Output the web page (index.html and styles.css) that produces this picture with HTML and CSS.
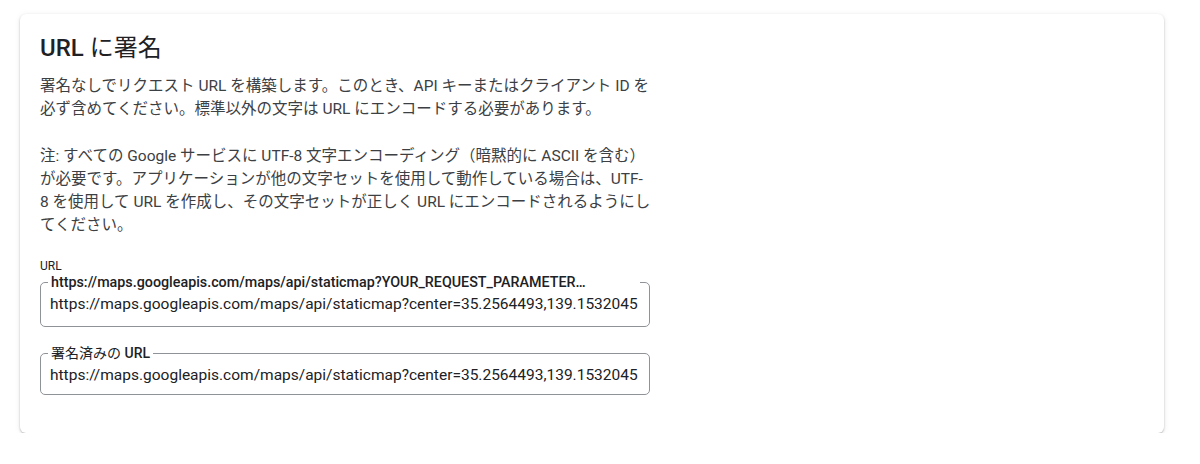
FILE: index.html
```html
<!DOCTYPE html>
<html lang="ja">
<head>
<meta charset="utf-8">
<link rel="stylesheet" href="styles.css">
</head>
<body>
<div class="page">
  <section class="card">
    <h2 class="title">URL <span class="jp">に署名</span></h2>
    <div class="content">
      <p class="para">署名なしでリクエスト URL を構築します。このとき、API キーまたはクライアント ID を必ず含めてください。標準以外の文字は URL にエンコードする必要があります。</p>
      <p class="para">注: すべての Google サービスに UTF-8 文字エンコーディング（暗黙的に ASCII を含む）が必要です。アプリケーションが他の文字セットを使用して動作している場合は、UTF-<br>8 を使用して URL を作成し、その文字セットが正しく URL にエンコードされるようにしてください。</p>
      <div class="field-label">URL</div>
      <fieldset class="field">
        <legend class="legend legend-wide">https://maps.googleapis.com/maps/api/staticmap?YOUR_REQUEST_PARAMETER…</legend>
        <div class="value">https://maps.googleapis.com/maps/api/staticmap?center=35.2564493,139.1532045</div>
      </fieldset>
      <fieldset class="field field-second">
        <legend class="legend"><span class="jp">署名済みの</span> URL</legend>
        <div class="value">https://maps.googleapis.com/maps/api/staticmap?center=35.2564493,139.1532045</div>
      </fieldset>
    </div>
  </section>
</div>
</body>
</html>
```

FILE: styles.css
```css
html, body {
  margin: 0;
  padding: 0;
  background: #ffffff;
}

body {
  font-family: Roboto, "Noto Sans CJK JP", sans-serif;
  color: #3c4043;
}

.page {
  padding: 14px 36px 0 20px;
}

.card {
  height: 419px;
  box-sizing: border-box;
  padding: 20px 20px;
  border-radius: 6px;
  background: #ffffff;
  box-shadow: 0 1px 2px rgba(0, 0, 0, 0.25), 0 1px 6px rgba(0, 0, 0, 0.08);
}

.title {
  margin: 0;
  font-size: 24px;
  line-height: 28px;
  font-weight: 500;
  color: #202124;
}

.content {
  width: 612px;
}

.para {
  margin: 13px 0 0;
  font-size: 15.5px;
  line-height: 23px;
}

.para + .para {
  margin-top: 24px;
}

.field-label {
  margin-top: 21px;
  font-size: 12px;
  line-height: 16px;
  color: #202124;
}

.field {
  margin: 0;
  min-width: 0;
  padding: 0 10px 10px 9px;
  width: 610px;
  box-sizing: border-box;
  border: 1px solid #8f9398;
  border-radius: 5px;
}

.field-second {
  margin-top: 18px;
  padding-bottom: 7px;
}

.legend {
  padding: 0 3px;
  margin-left: -2px;
  font-size: 14px;
  line-height: 16px;
  font-weight: 500;
  color: #202124;
  white-space: nowrap;
}

.legend-wide {
  width: 592px;
  box-sizing: border-box;
  font-size: 14.3px;
}

.jp {
  font-weight: 400;
}

.value {
  margin-top: 2px;
  font-size: 15.5px;
  line-height: 24px;
  color: #202124;
  white-space: nowrap;
  overflow: hidden;
}
```
